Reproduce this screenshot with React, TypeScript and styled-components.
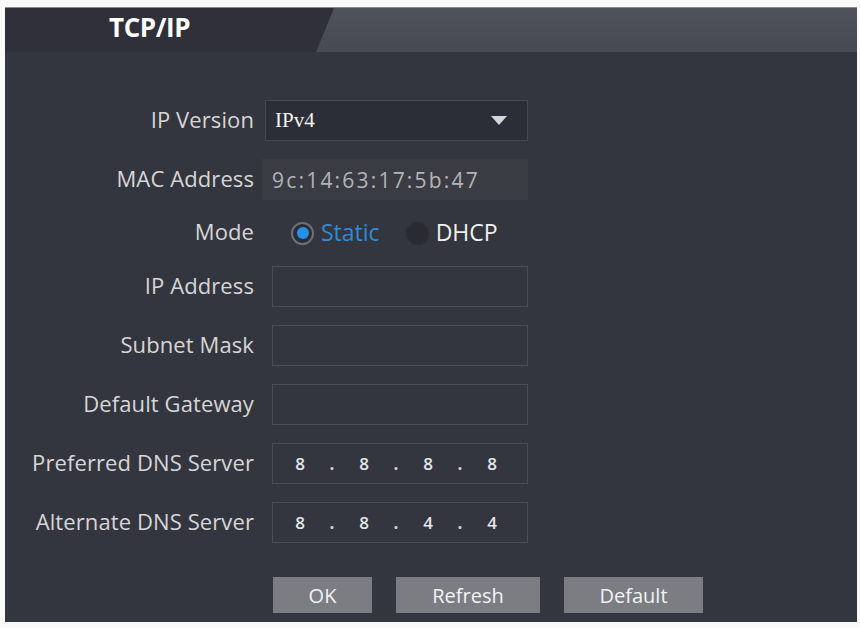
import React from "react";
import styled, { createGlobalStyle } from "styled-components";

const Global = createGlobalStyle`
  html, body { margin: 0; padding: 0; background: #ffffff; }
  body { font-family: "Open Sans", "Liberation Sans", sans-serif; }
  * { box-sizing: border-box; }
`;

const Page = styled.div`
  width: 860px;
  height: 628px;
  padding: 7px 3px 6px 5px;
  background: #fafafa;
`;

const Panel = styled.div`
  height: 100%;
  background: #33353f;
  display: flex;
  flex-direction: column;
  border-top: 1px solid #8a8b90;
`;

const Header = styled.div`
  height: 44px;
  display: flex;
  background: #2f3039;
`;

const Tab = styled.div`
  width: 311px;
  padding: 4px 0 0 104px;
  color: #ffffff;
  font-family: "Open Sans", sans-serif;
  font-weight: 700;
  font-size: 26px;
  line-height: 30px;
  letter-spacing: -0.4px;
`;

const Strip = styled.div`
  flex: 1;
  background: linear-gradient(#4f515b, #474953);
  clip-path: polygon(18px 0, 100% 0, 100% 100%, 0 100%);
`;

const Form = styled.div`
  display: grid;
  grid-template-columns: 249px 1fr;
  grid-template-rows: 41px 41px 30px 41px 41px 41px 41px 41px;
  column-gap: 18px;
  row-gap: 18px;
  align-items: center;
  padding-top: 48px;
`;

const Label = styled.div`
  text-align: right;
  color: #d6d6d6;
  font-size: 22px;
  letter-spacing: 0.1px;
  white-space: nowrap;
  padding-bottom: 4px;
`;

const Box = styled.div<{ $shift?: number; $bg?: string; $border?: string }>`
  height: 41px;
  margin-left: ${(p) => p.$shift ?? 0}px;
  width: ${(p) => 256 - (p.$shift ?? 0)}px;
  background: ${(p) => p.$bg ?? "#33353f"};
  border: 1px solid ${(p) => p.$border ?? "#4b4d56"};
  display: flex;
  align-items: center;
`;

const SelectText = styled.span`
  flex: 1;
  padding-left: 9px;
  font-family: "Liberation Serif", serif;
  font-size: 21px;
  color: #f2f2f2;
`;

const Caret = styled.svg`
  margin-right: 20px;
`;

const MacText = styled.span`
  padding-left: 9px;
  font-size: 21px;
  letter-spacing: 2.2px;
  color: #b3b4b6;
`;

const RadioGroup = styled.div`
  display: flex;
  align-items: center;
  padding-left: 19px;
  height: 30px;
`;

const RadioDot = styled.span<{ $on?: boolean }>`
  width: 23px;
  height: 23px;
  border-radius: 50%;
  display: inline-flex;
  align-items: center;
  justify-content: center;
  background: ${(p) => (p.$on ? "#2b2d35" : "#2a2b32")};
  border: 2px solid ${(p) => (p.$on ? "#6d6f77" : "#2c2d34")};
  &::after {
    content: "";
    width: 12px;
    height: 12px;
    border-radius: 50%;
    background: ${(p) => (p.$on ? "#2590e4" : "transparent")};
  }
`;

const RadioLabel = styled.span<{ $on?: boolean }>`
  font-size: 23px;
  color: ${(p) => (p.$on ? "#2f8cd2" : "#f0f0f0")};
  margin-left: 7px;
  margin-right: 26px;
  padding-bottom: 3px;
`;

const Seg = styled.span`
  width: 48px;
  text-align: center;
  font-size: 17px;
  font-weight: 600;
  color: #e6e6e6;
`;

const Dot = styled.span`
  width: 16px;
  text-align: center;
  font-size: 17px;
  font-weight: 700;
  color: #cfcfcf;
`;

const Buttons = styled.div`
  display: flex;
  gap: 24px;
  padding-left: 268px;
  margin-top: 34px;
`;

const Button = styled.div<{ $w: number }>`
  width: ${(p) => p.$w}px;
  height: 36px;
  background: #7b7d83;
  color: #f3f3f3;
  font-size: 20px;
  display: flex;
  align-items: center;
  justify-content: center;
`;

const IpField = ({ parts }: { parts: string[] }) => (
  <Box>
    <span style={{ width: 3 }} />
    {parts.map((p, i) => (
      <React.Fragment key={i}>
        {i > 0 && <Dot>.</Dot>}
        <Seg>{p}</Seg>
      </React.Fragment>
    ))}
  </Box>
);

export default function App() {
  return (
    <>
      <Global />
      <Page>
        <Panel>
          <Header>
            <Tab>TCP/IP</Tab>
            <Strip />
          </Header>
          <Form>
            <Label>IP Version</Label>
            <Box $shift={-7} $bg="#2c2e37" $border="#464851">
              <SelectText>IPv4</SelectText>
              <Caret width="16" height="9" viewBox="0 0 16 9">
                <path d="M0 0 H16 L8 9 Z" fill="#d4d5d8" />
              </Caret>
            </Box>
            <Label>MAC Address</Label>
            <Box $shift={-10} $bg="#3a3c44" $border="#3a3c44">
              <MacText>9c:14:63:17:5b:47</MacText>
            </Box>
            <Label>Mode</Label>
            <RadioGroup>
              <RadioDot $on />
              <RadioLabel $on>Static</RadioLabel>
              <RadioDot />
              <RadioLabel>DHCP</RadioLabel>
            </RadioGroup>
            <Label>IP Address</Label>
            <Box />
            <Label>Subnet Mask</Label>
            <Box />
            <Label>Default Gateway</Label>
            <Box />
            <Label>Preferred DNS Server</Label>
            <IpField parts={["8", "8", "8", "8"]} />
            <Label>Alternate DNS Server</Label>
            <IpField parts={["8", "8", "4", "4"]} />
          </Form>
          <Buttons>
            <Button $w={99}>OK</Button>
            <Button $w={144}>Refresh</Button>
            <Button $w={139}>Default</Button>
          </Buttons>
        </Panel>
      </Page>
    </>
  );
}
